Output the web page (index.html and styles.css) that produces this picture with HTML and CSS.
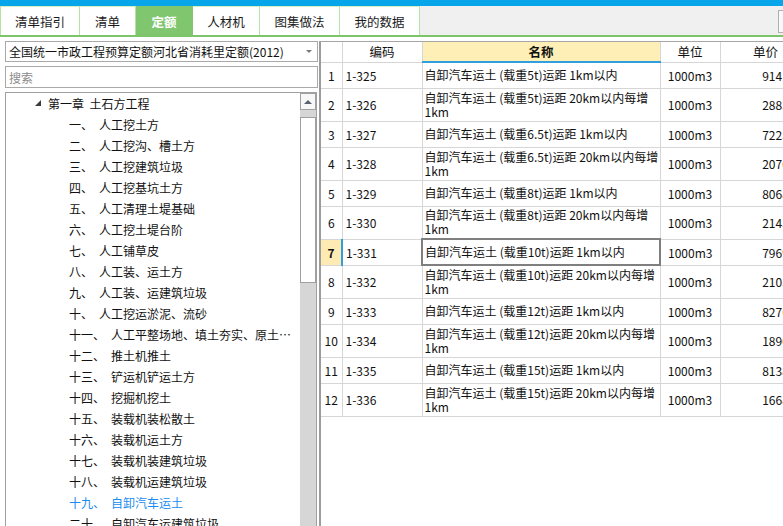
FILE: index.html
```html
<!DOCTYPE html>
<html lang="zh-CN">
<head>
<meta charset="utf-8">
<link rel="stylesheet" href="styles.css">
</head>
<body>
<div class="topbar"></div>
<div class="tabbar">
  <div class="tab t1">清单指引</div>
  <div class="tab t2">清单</div>
  <div class="tab t3 active">定额</div>
  <div class="tab t4">人材机</div>
  <div class="tab t5">图集做法</div>
  <div class="tab t6">我的数据</div>
  <div class="corner"></div>
</div>
<div class="main">
  <div class="left">
    <div class="combo"><span class="combo-text">全国统一市政工程预算定额河北省消耗里定额(2012)</span><span class="caret"></span></div>
    <div class="search">搜索</div>
    <div class="tree">
      <div class="tree-list">
        <div class="row chapter"><svg class="tri" width="6" height="6" viewBox="0 0 6 6"><polygon points="6,0 6,6 0,6" fill="#3c3c3c"/></svg><span>第一章&nbsp;&nbsp;土石方工程</span></div>
        <div class="row item"><span class="lbl">一、</span><span>人工挖土方</span></div>
        <div class="row item"><span class="lbl">二、</span><span>人工挖沟、槽土方</span></div>
        <div class="row item"><span class="lbl">三、</span><span>人工挖建筑垃圾</span></div>
        <div class="row item"><span class="lbl">四、</span><span>人工挖基坑土方</span></div>
        <div class="row item"><span class="lbl">五、</span><span>人工清理土堤基础</span></div>
        <div class="row item"><span class="lbl">六、</span><span>人工挖土堤台阶</span></div>
        <div class="row item"><span class="lbl">七、</span><span>人工铺草皮</span></div>
        <div class="row item"><span class="lbl">八、</span><span>人工装、运土方</span></div>
        <div class="row item"><span class="lbl">九、</span><span>人工装、运建筑垃圾</span></div>
        <div class="row item"><span class="lbl">十、</span><span>人工挖运淤泥、流砂</span></div>
        <div class="row item"><span class="lbl">十一、</span><span class="txt">人工平整场地、填土夯实、原土碾压</span></div>
        <div class="row item"><span class="lbl">十二、</span><span>推土机推土</span></div>
        <div class="row item"><span class="lbl">十三、</span><span>铲运机铲运土方</span></div>
        <div class="row item"><span class="lbl">十四、</span><span>挖掘机挖土</span></div>
        <div class="row item"><span class="lbl">十五、</span><span>装载机装松散土</span></div>
        <div class="row item"><span class="lbl">十六、</span><span>装载机运土方</span></div>
        <div class="row item"><span class="lbl">十七、</span><span>装载机装建筑垃圾</span></div>
        <div class="row item"><span class="lbl">十八、</span><span>装载机运建筑垃圾</span></div>
        <div class="row item current"><span class="lbl">十九、</span><span>自卸汽车运土</span></div>
        <div class="row item"><span class="lbl">二十、</span><span>自卸汽车运建筑垃圾</span></div>
      </div>
      <div class="scroll">
        <div class="sbtn"><span class="up"></span></div>
        <div class="thumb"></div>
      </div>
    </div>
  </div>
  <div class="right">
    <table class="grid">
      <colgroup><col class="c-no"><col class="c-code"><col class="c-name"><col class="c-unit"><col class="c-price"></colgroup>
      <thead>
        <tr class="head"><th></th><th>编码</th><th class="hl">名称</th><th>单位</th><th>单价</th></tr>
      </thead>
      <tbody>
        <tr><td class="no">1</td><td class="code">1-325</td><td class="name">自卸汽车运土 (载重5t)运距 1km以内</td><td class="unit">1000m3</td><td class="price">9141.20</td></tr>
        <tr class="two"><td class="no">2</td><td class="code">1-326</td><td class="name">自卸汽车运土 (载重5t)运距 20km以内每增<br>1km</td><td class="unit">1000m3</td><td class="price">2883.75</td></tr>
        <tr><td class="no">3</td><td class="code">1-327</td><td class="name">自卸汽车运土 (载重6.5t)运距 1km以内</td><td class="unit">1000m3</td><td class="price">7225.03</td></tr>
        <tr class="two"><td class="no">4</td><td class="code">1-328</td><td class="name">自卸汽车运土 (载重6.5t)运距 20km以内每增<br>1km</td><td class="unit">1000m3</td><td class="price">2070.50</td></tr>
        <tr><td class="no">5</td><td class="code">1-329</td><td class="name">自卸汽车运土 (载重8t)运距 1km以内</td><td class="unit">1000m3</td><td class="price">8068.13</td></tr>
        <tr class="two"><td class="no">6</td><td class="code">1-330</td><td class="name">自卸汽车运土 (载重8t)运距 20km以内每增<br>1km</td><td class="unit">1000m3</td><td class="price">2145.00</td></tr>
        <tr class="sel"><td class="no">7</td><td class="code">1-331</td><td class="name">自卸汽车运土 (载重10t)运距 1km以内</td><td class="unit">1000m3</td><td class="price">7969.66</td></tr>
        <tr class="two"><td class="no">8</td><td class="code">1-332</td><td class="name">自卸汽车运土 (载重10t)运距 20km以内每增<br>1km</td><td class="unit">1000m3</td><td class="price">2103.75</td></tr>
        <tr><td class="no">9</td><td class="code">1-333</td><td class="name">自卸汽车运土 (载重12t)运距 1km以内</td><td class="unit">1000m3</td><td class="price">8276.91</td></tr>
        <tr class="two"><td class="no">10</td><td class="code">1-334</td><td class="name">自卸汽车运土 (载重12t)运距 20km以内每增<br>1km</td><td class="unit">1000m3</td><td class="price">1890.00</td></tr>
        <tr><td class="no">11</td><td class="code">1-335</td><td class="name">自卸汽车运土 (载重15t)运距 1km以内</td><td class="unit">1000m3</td><td class="price">8138.58</td></tr>
        <tr class="two"><td class="no">12</td><td class="code">1-336</td><td class="name">自卸汽车运土 (载重15t)运距 20km以内每增<br>1km</td><td class="unit">1000m3</td><td class="price">1668.75</td></tr>
      </tbody>
    </table>
  </div>
</div>
</body>
</html>
```
FILE: styles.css
```css
html, body {
  margin: 0;
  padding: 0;
}
body {
  width: 783px;
  height: 526px;
  overflow: hidden;
  font-family: "Noto Sans CJK SC", "Liberation Sans", sans-serif;
  font-size: 12px;
  color: #111;
  background: #fff;
  display: flex;
  flex-direction: column;
}
.topbar {
  height: 6px;
  background: #07a6ea;
  flex-shrink: 0;
}
.tabbar {
  height: 29px;
  flex-shrink: 0;
  display: flex;
  background: #f0f0f0;
  border-bottom: 2px solid #7cc56a;
  overflow: hidden;
}
.tab {
  box-sizing: border-box;
  display: flex;
  align-items: center;
  justify-content: center;
  background: #fff;
  border-right: 1px solid #b6e3a2;
  border-top: 1px solid #d2efc4;
  font-size: 12.5px;
  color: #1a1a1a;
}
.t1 { width: 80px; border-left: 1px solid #b6e3a2; }
.t2 { width: 56px; }
.t3 { width: 57px; }
.t4 { width: 67px; }
.t5 { width: 80px; }
.t6 { width: 80px; }
.tab.active {
  background: #80c66e;
  border-color: #80c66e;
  color: #fff;
  font-weight: bold;
}
.corner {
  margin-left: auto;
  margin-right: -6px;
  margin-top: 4px;
  width: 11px;
  height: 23px;
  box-sizing: border-box;
  border: 1px solid #b0b0b0;
  background: #f9f9f9;
  flex-shrink: 0;
}
.main {
  flex: 1;
  display: flex;
  min-height: 0;
}
.left {
  width: 319px;
  flex-shrink: 0;
  box-sizing: border-box;
  padding: 4px 1px 0 5px;
  display: flex;
  flex-direction: column;
  gap: 4px;
  background: #fff;
}
.combo {
  height: 21px;
  flex-shrink: 0;
  box-sizing: border-box;
  border: 1px solid #a9a9a9;
  display: flex;
  align-items: center;
  padding: 0 5px 0 3px;
  white-space: nowrap;
}
.combo-text {
  flex: 1;
}
.caret {
  width: 0;
  height: 0;
  border-left: 3px solid transparent;
  border-right: 3px solid transparent;
  border-top: 3px solid #7a7a7a;
}
.search {
  height: 22px;
  flex-shrink: 0;
  box-sizing: border-box;
  border: 1px solid #a9a9a9;
  display: flex;
  align-items: center;
  padding-left: 3px;
  color: #8c8c8c;
}
.tree {
  flex: 1;
  min-height: 0;
  margin-right: 1px;
  margin-bottom: -12px;
  border: 1px solid #a0a0a0;
  display: flex;
}
.tree-list {
  flex: 1;
  min-width: 0;
  overflow: hidden;
  padding-right: 2px;
}
.row {
  height: 21px;
  display: flex;
  align-items: center;
  white-space: nowrap;
}
.chapter {
  padding-left: 29px;
}
.chapter .tri {
  margin-right: 7px;
  margin-top: -2px;
}
.item {
  padding-left: 63px;
}
.item .lbl {
  margin-right: 6px;
  flex-shrink: 0;
}
.item .txt {
  overflow: hidden;
  text-overflow: ellipsis;
  min-width: 0;
}
.item.current {
  color: #1a8cf0;
}
.scroll {
  width: 16px;
  flex-shrink: 0;
  background: #d6d6d6;
  display: flex;
  flex-direction: column;
}
.sbtn {
  height: 17px;
  box-sizing: border-box;
  border: 1px solid #a0a0a0;
  background: #f7f7f7;
  display: flex;
  align-items: center;
  justify-content: center;
}
.up {
  width: 0;
  height: 0;
  border-left: 4px solid transparent;
  border-right: 4px solid transparent;
  border-bottom: 4px solid #5a6070;
}
.thumb {
  margin-top: 7px;
  height: 166px;
  box-sizing: border-box;
  border: 1px solid #a0a0a0;
  background: #fff;
}
.right {
  flex: 1;
  min-width: 0;
  margin-top: 4px;
  border-left: 2px solid #9c9c9c;
  border-top: 1px solid #a6a6a6;
  overflow: hidden;
  background: #fff;
}
.grid {
  border-collapse: collapse;
  table-layout: fixed;
  width: 490px;
}
.c-no { width: 21px; }
.c-code { width: 80px; }
.c-name { width: 238px; }
.c-unit { width: 60px; }
.c-price { width: 91px; }
.grid th, .grid td {
  border: 1px solid #d6d6d6;
  padding: 0;
  white-space: nowrap;
  overflow: hidden;
}
.grid th:first-child, .grid td:first-child {
  border-left: none;
}
.grid thead th {
  border-top: none;
  height: 19px;
  font-weight: normal;
  font-size: 12.5px;
  text-align: center;
}
.grid th.hl {
  background: #feefb6;
  font-weight: bold;
  border-bottom: 2px solid #2f9fdf;
}
.grid tbody tr {
  height: 26px;
}
.grid tbody tr.two {
  height: 33px;
}
.no {
  text-align: center;
}
.code {
  padding-left: 3px !important;
}
.name {
  padding: 1px 2px !important;
  line-height: 14px;
}
.unit {
  text-align: center;
}
.price {
  text-align: right;
  padding-right: 5px !important;
}
.sel .no {
  background: #fdebb3;
  font-weight: bold;
  border-right: 2px solid #2f9fdf;
}
.sel .name {
  border: 2px solid #7f7f7f;
}
```
